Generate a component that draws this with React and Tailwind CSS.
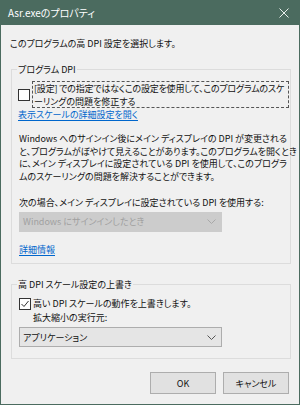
import React from "react";

const font = "font-['Noto_Sans_CJK_JP',sans-serif] [font-feature-settings:'palt']";

function Chevron({ color }) {
  return (
    <svg width="9" height="5" viewBox="0 0 9 5" className="shrink-0">
      <path d="M0.5 0.5 L4.5 4.5 L8.5 0.5" fill="none" stroke={color} strokeWidth="1" />
    </svg>
  );
}

export default function App() {
  return (
    <div className={`w-[300px] h-[405px] bg-[#f0f0f0] border-x border-b border-[#4b6b5f] flex flex-col text-[9px] leading-[13px] text-[#111] whitespace-nowrap ${font}`}>
      <div className="h-[25px] bg-[#4b6b5f] flex items-center justify-between pl-[7px] pr-[10px] text-white text-[10px] shrink-0">
        <span>Asr.exeのプロパティ</span>
        <svg width="10" height="10" viewBox="0 0 10 10">
          <path d="M0.5 0.5 L9.5 9.5 M9.5 0.5 L0.5 9.5" stroke="#e8eeeb" strokeWidth="1" />
        </svg>
      </div>

      <div className="pl-[9px] mt-[12px]">このプログラムの高 DPI 設定を選択します。</div>

      <div className="ml-[10px] w-[280px] h-[195px] mt-[19px] border border-[#dcdcdc] flex flex-col shrink-0">
        <span className="-mt-[7px] ml-[5px] px-[1px] bg-[#f0f0f0] self-start">プログラム DPI</span>
        <div className="flex items-start mt-[5px]">
          <div className="w-[12px] h-[12px] bg-white border border-[#333] ml-[6px] mt-[8px] shrink-0" />
          <div className="ml-[2px] w-[257px] h-[27px] border border-dashed border-[#555] pl-[1px]">
            <div className="tracking-[-0.2px]">[設定] での指定ではなくこの設定を使用して、このプログラムのスケ</div>
            <div>ーリングの問題を修正する</div>
          </div>
        </div>
        <div className="ml-[6px] text-[#0066cc] underline underline-offset-[2px] self-start">表示スケールの詳細設定を開く</div>
        <div className="ml-[7px] mt-[12px] leading-[12.7px]">
          <div>Windows へのサインイン後にメイン ディスプレイの DPI が変更される</div>
          <div className="tracking-[-0.05px]">と、プログラムがぼやけて見えることがあります。このプログラムを開くとき</div>
          <div>に、メイン ディスプレイに設定されている DPI を使用して、このプログラ</div>
          <div>ムのスケーリングの問題を解決することができます。</div>
        </div>
        <div className="ml-[7px] mt-[12px]">次の場合、メイン ディスプレイに設定されている DPI を使用する:</div>
        <div className="ml-[7px] mt-[3px] w-[203px] h-[20px] bg-[#cccccc] border border-[#cccccc] flex items-center justify-between pl-[3px] pr-[5px] text-[#a0a0a0]">
          <span>Windows にサインインしたとき</span>
          <Chevron color="#a8a8a8" />
        </div>
        <div className="ml-[7px] mt-[11px] text-[#0066cc] underline underline-offset-[2px] self-start">詳細情報</div>
      </div>

      <div className="ml-[10px] w-[280px] h-[75px] mt-[20px] border border-[#dcdcdc] flex flex-col shrink-0">
        <span className="-mt-[7px] ml-[5px] px-[1px] bg-[#f0f0f0] self-start">高 DPI スケール設定の上書き</span>
        <div className="flex items-start mt-[6px]">
          <div className="w-[12px] h-[12px] bg-white border border-[#333] ml-[7px] mt-[1px] shrink-0 flex items-center justify-center">
            <svg width="10" height="10" viewBox="0 0 10 10">
              <path d="M1.5 5 L4 7.5 L8.5 2" fill="none" stroke="#333" strokeWidth="1" />
            </svg>
          </div>
          <div className="ml-[2px] leading-[14px]">
            <div>高い DPI スケールの動作を上書きします。</div>
            <div>拡大縮小の実行元:</div>
          </div>
        </div>
        <div className="ml-[7px] mt-[2px] w-[203px] h-[20px] bg-[#e5e5e5] border border-[#adadad] flex items-center justify-between pl-[3px] pr-[5px]">
          <span>アプリケーション</span>
          <Chevron color="#555" />
        </div>
      </div>

      <div className="flex justify-end gap-[7px] mr-[10px] mt-[13px]">
        <button className="w-[66px] h-[22px] bg-[#e1e1e1] border border-[#adadad]">OK</button>
        <button className="w-[66px] h-[22px] bg-[#e1e1e1] border border-[#adadad]">キャンセル</button>
      </div>
    </div>
  );
}
